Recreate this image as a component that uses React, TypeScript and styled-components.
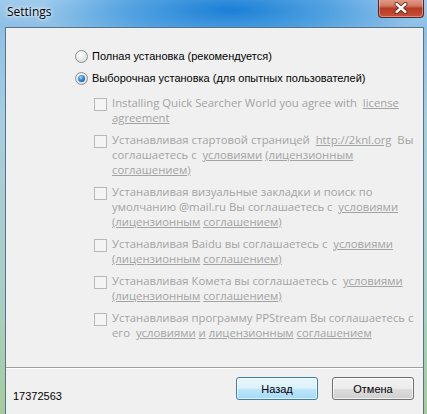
import React from "react";
import styled, { createGlobalStyle, css } from "styled-components";

const GlobalStyle = createGlobalStyle`
  body {
    margin: 0;
    background: #6fa6d6;
  }
`;

const Window = styled.div`
  position: relative;
  display: flex;
  flex-direction: column;
  width: 427px;
  height: 414px;
  overflow: hidden;
  background:
    radial-gradient(ellipse 190px 42px at 230px 10px, #1a7fd6 0%, rgba(40, 140, 220, 0.6) 55%, rgba(120, 180, 230, 0) 100%),
    linear-gradient(180deg, #9fcbec 0px, #8ec0e6 26px, #a8cddf 120px, #a9cfc4 300px, #a6cc9c 414px);
`;

const TitleBar = styled.div`
  display: flex;
  justify-content: space-between;
  align-items: flex-start;
  height: 27px;
  padding: 0 3px 0 7px;
  flex: none;
`;

const Title = styled.span`
  margin-top: 4px;
  font-family: "Open Sans", "Liberation Sans", sans-serif;
  font-size: 12px;
  line-height: 16px;
  color: #000;
  text-shadow: 0 0 6px #fff, 0 0 3px #fff;
`;

const CloseButton = styled.div`
  display: flex;
  align-items: center;
  justify-content: center;
  width: 44px;
  height: 19px;
  margin-top: -2px;
  border: 1px solid #5a2525;
  border-top: none;
  border-radius: 0 0 4px 4px;
  background: linear-gradient(180deg, #e8a493 0%, #d27a65 40%, #b83a22 55%, #c8503a 100%);
  box-shadow: inset 0 0 0 1px rgba(255, 255, 255, 0.35);
`;

const Client = styled.div`
  display: flex;
  flex-direction: column;
  flex: 1;
  margin: 0 3px 0 5px;
  background: #f0f0f0;
  border: 1px solid #58728c;
  border-bottom: none;
`;

const Body = styled.div`
  display: flex;
  flex-direction: column;
  flex: 1;
  padding: 17px 0 0 69px;
`;

const tahoma = css`
  font-family: "Liberation Sans", Tahoma, sans-serif;
  font-size: 11px;
`;

const RadioRow = styled.label`
  display: flex;
  align-items: center;
  gap: 4px;
  height: 22px;
  ${tahoma};
  color: #000;
`;

const RadioDot = styled.span<{ $checked?: boolean }>`
  box-sizing: border-box;
  width: 13px;
  height: 13px;
  border-radius: 50%;
  border: 1px solid #8e8f8f;
  background: radial-gradient(circle at 40% 35%, #ffffff 0%, #e4e4e4 60%, #cfcfcf 100%);
  display: flex;
  align-items: center;
  justify-content: center;
  &::after {
    content: "";
    display: ${(p) => (p.$checked ? "block" : "none")};
    width: 7px;
    height: 7px;
    border-radius: 50%;
    background: radial-gradient(circle at 40% 35%, #9fe3ff 0%, #2a8ad4 45%, #0b3e86 100%);
  }
`;

const Options = styled.div`
  display: flex;
  flex-direction: column;
  gap: 7px;
  margin-top: 6px;
  padding-left: 19px;
`;

const CheckRow = styled.div`
  display: flex;
  align-items: flex-start;
  gap: 5px;
`;

const CheckBox = styled.span`
  box-sizing: border-box;
  flex: none;
  width: 13px;
  height: 13px;
  margin-top: 3px;
  border: 1px solid #b8b8b8;
  background: #f4f4f4;
`;

const CheckText = styled.div`
  font-family: "Open Sans", "Liberation Sans", sans-serif;
  font-size: 11.3px;
  line-height: 15px;
  color: #a3a3a3;
  white-space: pre;
`;

const Line = styled.div``;

const Link = styled.span`
  text-decoration: underline;
`;

const Separator = styled.div`
  height: 1px;
  background: #a0a0a0;
  border-bottom: 1px solid #ffffff;
  flex: none;
`;

const Footer = styled.div`
  display: flex;
  align-items: flex-start;
  height: 37px;
  padding: 8px 9px 0 7px;
  flex: none;
`;

const BuildNumber = styled.span`
  ${tahoma};
  margin-top: 13px;
  color: #000;
  flex: 1;
`;

const Button = styled.button<{ $default?: boolean }>`
  box-sizing: border-box;
  width: 82px;
  height: 23px;
  margin-left: 14px;
  border-radius: 3px;
  ${tahoma};
  color: #000;
  padding: 0;
  border: 1px solid ${(p) => (p.$default ? "#3c7fb1" : "#707070")};
  background: ${(p) =>
    p.$default
      ? "linear-gradient(180deg, #eaf6fd 0%, #d9f0fc 50%, #bee6fd 51%, #a7d9f5 100%)"
      : "linear-gradient(180deg, #f2f2f2 0%, #ebebeb 50%, #dddddd 51%, #cfcfcf 100%)"};
  box-shadow: inset 0 0 0 1px rgba(255, 255, 255, 0.7);
`;

type Segment = string | { link: string };

interface CheckOption {
  lines: Segment[][];
}

const options: CheckOption[] = [
  {
    lines: [
      ["Installing Quick Searcher World you agree with  ", { link: "license" }],
      [{ link: "agreement" }],
    ],
  },
  {
    lines: [
      ["Устанавливая стартовой страницей  ", { link: "http://2knl.org" }, "  Вы"],
      ["соглашаетесь с  ", { link: "условиями" }, " ", { link: "(лицензионным" }],
      [{ link: "соглашением)" }],
    ],
  },
  {
    lines: [
      ["Устанавливая визуальные закладки и поиск по"],
      ["умолчанию @mail.ru Вы соглашаетесь с  ", { link: "условиями" }],
      [{ link: "(лицензионным" }, " ", { link: "соглашением)" }],
    ],
  },
  {
    lines: [
      ["Устанавливая Baidu вы соглашаетесь с  ", { link: "условиями" }],
      [{ link: "(лицензионным" }, " ", { link: "соглашением)" }],
    ],
  },
  {
    lines: [
      ["Устанавливая Комета вы соглашаетесь с  ", { link: "условиями" }],
      [{ link: "(лицензионным" }, " ", { link: "соглашением)" }],
    ],
  },
  {
    lines: [
      ["Устанавливая программу PPStream Вы соглашаетесь с"],
      [
        "его  ",
        { link: "условиями" },
        " ",
        { link: "и" },
        " ",
        { link: "лицензионным" },
        " ",
        { link: "соглашением" },
      ],
    ],
  },
];

const renderLine = (segments: Segment[], index: number) => (
  <Line key={index}>
    {segments.map((seg, i) =>
      typeof seg === "string" ? (
        <React.Fragment key={i}>{seg}</React.Fragment>
      ) : (
        <Link key={i}>{seg.link}</Link>
      )
    )}
  </Line>
);

const CloseIcon = () => (
  <svg width="14" height="12" viewBox="0 0 14 12">
    <path
      d="M2.5 2 L11.5 10 M11.5 2 L2.5 10"
      stroke="#5a1f16"
      strokeWidth="4"
      strokeLinecap="round"
    />
    <path
      d="M2.5 2 L11.5 10 M11.5 2 L2.5 10"
      stroke="#ffffff"
      strokeWidth="2.4"
      strokeLinecap="round"
    />
  </svg>
);

const App: React.FC = () => {
  return (
    <>
      <GlobalStyle />
      <Window>
        <TitleBar>
          <Title>Settings</Title>
          <CloseButton>
            <CloseIcon />
          </CloseButton>
        </TitleBar>
        <Client>
          <Body>
            <RadioRow>
              <RadioDot />
              Полная установка (рекомендуется)
            </RadioRow>
            <RadioRow>
              <RadioDot $checked />
              Выборочная установка (для опытных пользователей)
            </RadioRow>
            <Options>
              {options.map((opt, i) => (
                <CheckRow key={i}>
                  <CheckBox />
                  <CheckText>{opt.lines.map(renderLine)}</CheckText>
                </CheckRow>
              ))}
            </Options>
          </Body>
          <Separator />
          <Footer>
            <BuildNumber>17372563</BuildNumber>
            <Button $default>Назад</Button>
            <Button>Отмена</Button>
          </Footer>
        </Client>
      </Window>
    </>
  );
};

export default App;
